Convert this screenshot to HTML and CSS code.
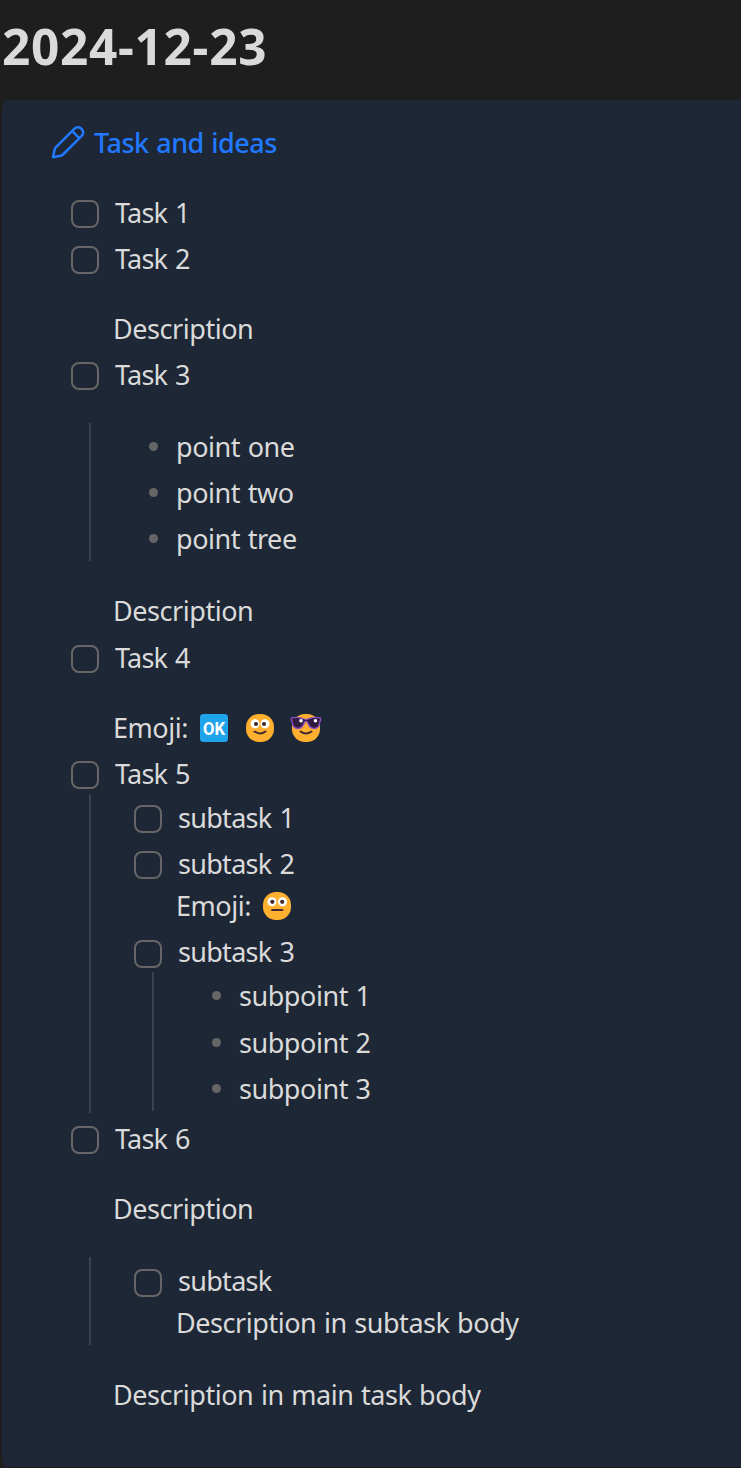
FILE: index.html
```html
<!DOCTYPE html>
<html lang="en">
<head>
<meta charset="utf-8">
<title>2024-12-23</title>
<link rel="stylesheet" href="styles.css">
</head>
<body>
<h1 class="heading"><span>2024-12-23</span></h1>
<section class="callout">
  <header class="callout-title">
    <svg class="pencil" viewBox="0 0 34 34"><path d="M2 32.200 L3.600 24.700 Q4 23.200 5 22.200 L23.500 3.700 C28 -.6 35.500 6 30.600 11 L12 29.500 Q11 30.400 9.600 30.800 Z M21.300 6.200 L28.200 13.100"/></svg>
    <span class="title-text">Task and ideas</span>
  </header>
  <ul class="tasks">
    <li><div class="task"><i class="box"></i><span>Task 1</span></div></li>
    <li><div class="task"><i class="box"></i><span>Task 2</span></div>
      <p class="para">Description</p></li>
    <li><div class="task"><i class="box"></i><span>Task 3</span></div>
      <ul class="nested points spaced">
        <li>point one</li><li>point two</li><li>point tree</li>
      </ul>
      <p class="para">Description</p></li>
    <li class="offset"><div class="task"><i class="box"></i><span>Task 4</span></div>
      <p class="para emoji-line"><span class="emoji-label">Emoji:</span>
        <svg class="emoji" viewBox="0 0 28 28"><rect width="28" height="28" rx="3.500" fill="#1fa4ec"/><text class="ok" x="14" y="20.700" textLength="22" lengthAdjust="spacingAndGlyphs">OK</text></svg>
        <svg class="emoji" viewBox="0 0 28 28"><rect width="28" height="28" rx="13" fill="#ffb02e"/><circle cx="9" cy="9.800" r="4.500" fill="#fff"/><circle cx="19" cy="9.800" r="4.500" fill="#fff"/><circle cx="10" cy="10" r="2.100" fill="#402a32"/><circle cx="18" cy="10" r="2.100" fill="#402a32"/><path class="mouth" d="M8.500 17.500Q14 21.500 19.500 17.500"/></svg>
        <svg class="emoji" viewBox="0 0 28 28"><rect width="28" height="28" rx="13" fill="#ffb02e"/><path d="M-.6 4.200Q6 2.200 12 5Q14 5.800 16 5Q22 2.200 28.600 4.200V6.500L27.800 7.500C28 17 17.500 16.500 15.500 8Q14 7 12.500 8C10.500 16.500 0 17 .2 7.500L-.6 6.500Z" fill="#321b41" stroke="#8b50c4" stroke-width="1.300" stroke-linejoin="round"/><circle cx="9" cy="6.800" r="1.800" fill="#fff"/><circle cx="23.500" cy="6.800" r="1.800" fill="#fff"/><path class="mouth" d="M8.500 17.500Q14 21.500 19.500 17.500"/></svg>
      </p></li>
    <li><div class="task"><i class="box"></i><span>Task 5</span></div>
      <ul class="nested subtasks tight">
        <li><div class="task"><i class="box"></i><span>subtask 1</span></div></li>
        <li><div class="task"><i class="box"></i><span>subtask 2</span></div>
          <p class="para emoji-line flush"><span class="emoji-label">Emoji:</span>
            <svg class="emoji" viewBox="0 0 28 28"><rect width="28" height="28" rx="13" fill="#ffb02e"/><circle cx="9" cy="9.800" r="4.500" fill="#fff"/><circle cx="19.500" cy="9.800" r="4.500" fill="#fff"/><circle cx="9.300" cy="9.800" r="2.100" fill="#402a32"/><circle cx="19.200" cy="9.800" r="2.100" fill="#402a32"/><path class="mouth" d="M9 18H19.500"/></svg>
          </p></li>
        <li><div class="task"><i class="box low"></i><span>subtask 3</span></div>
          <ul class="nested points inner">
            <li>subpoint 1</li><li>subpoint 2</li><li>subpoint 3</li>
          </ul></li>
      </ul></li>
    <li><div class="task"><i class="box"></i><span>Task 6</span></div>
      <p class="para">Description</p>
      <ul class="nested subtasks spaced">
        <li><div class="task"><i class="box low"></i><span>subtask</span></div>
          <p class="para flush">Description in subtask body</p></li>
      </ul>
      <p class="para">Description in main task body</p></li>
  </ul>
</section>
</body>
</html>
```
FILE: styles.css
```css
* { box-sizing: border-box; }
body {
  margin: 0;
  background: #1e1e1e;
  color: #dadada;
  font: 27px/42px "Noto Sans", "Open Sans", sans-serif;
  letter-spacing: -0.45px;
  word-spacing: 1px;
}
ul { list-style: none; margin: 0; padding: 0; }
p { margin: 0; }
.heading {
  margin: 0;
  height: 100px;
  padding: 12px 0 0 2px;
  font-size: 49.5px;
  line-height: 68px;
  font-weight: 700;
  letter-spacing: 0.7px;
}
.callout {
  margin-left: 2px;
  height: 1367px;
  padding: 22px 0 0 49px;
  background: #1e2735;
  border-radius: 8px 0 0 8px;
}
.callout-title {
  display: flex;
  height: 42px;
  color: #2079ff;
  font-weight: 500;
  letter-spacing: -0.5px;
  margin-bottom: 28px;
}
.title-text { margin-left: 9px; }
.pencil {
  width: 34px;
  height: 34px;
  margin-top: 3px;
  fill: none;
  stroke: currentColor;
  stroke-width: 2.5;
  stroke-linejoin: round;
}
.tasks { padding-left: 20px; }
.tasks li + li { margin-top: 4px; }
.tasks > li.offset { margin-top: 5px; }
.task { display: flex; height: 42px; white-space: pre; letter-spacing: -0.8px; word-spacing: 1.6px; }
.subtasks .task { letter-spacing: -0.7px; }
.box {
  flex: none;
  width: 28px;
  height: 28px;
  margin: 8px 16px 0 0;
  border: 2px solid #666;
  border-radius: 8px;
}
.box.low { margin-top: 9px; }
.para { margin: 28px 0 0 42px; height: 42px; white-space: nowrap; }
.para.flush { margin-top: 0; }
.nested { margin-left: 18px; border-left: 2px solid #3a4250; }
.subtasks { padding-left: 43px; }
.points { padding-left: 84px; }
.points li { height: 42px; display: flex; }
.points li::before {
  content: "";
  flex: none;
  width: 9px;
  height: 9px;
  margin: 16px 18px 0 -26px;
  border-radius: 50%;
  background: #666;
}
.spaced { margin-top: 27px; padding-top: 3px; padding-bottom: 1px; }
.spaced + .para { margin-top: 29px; }
.tight { margin-top: -1px; padding-top: 3px; padding-bottom: 2px; margin-bottom: 5px; }
.inner { margin-top: -1px; padding-top: 3px; padding-bottom: 1px; }
.inner li:nth-child(2) { margin-top: 5px; }
.emoji-line { display: flex; }
.emoji-label { width: 87px; }
.emoji { width: 28px; height: 28px; margin: 7px 18px 0 0; overflow: visible; flex: none; }
.mouth { fill: none; stroke: #402a32; stroke-width: 2; stroke-linecap: round; }
.ok { font: 700 18px Roboto, sans-serif; letter-spacing: 0; word-spacing: 0; fill: #fff; text-anchor: middle; }
```
